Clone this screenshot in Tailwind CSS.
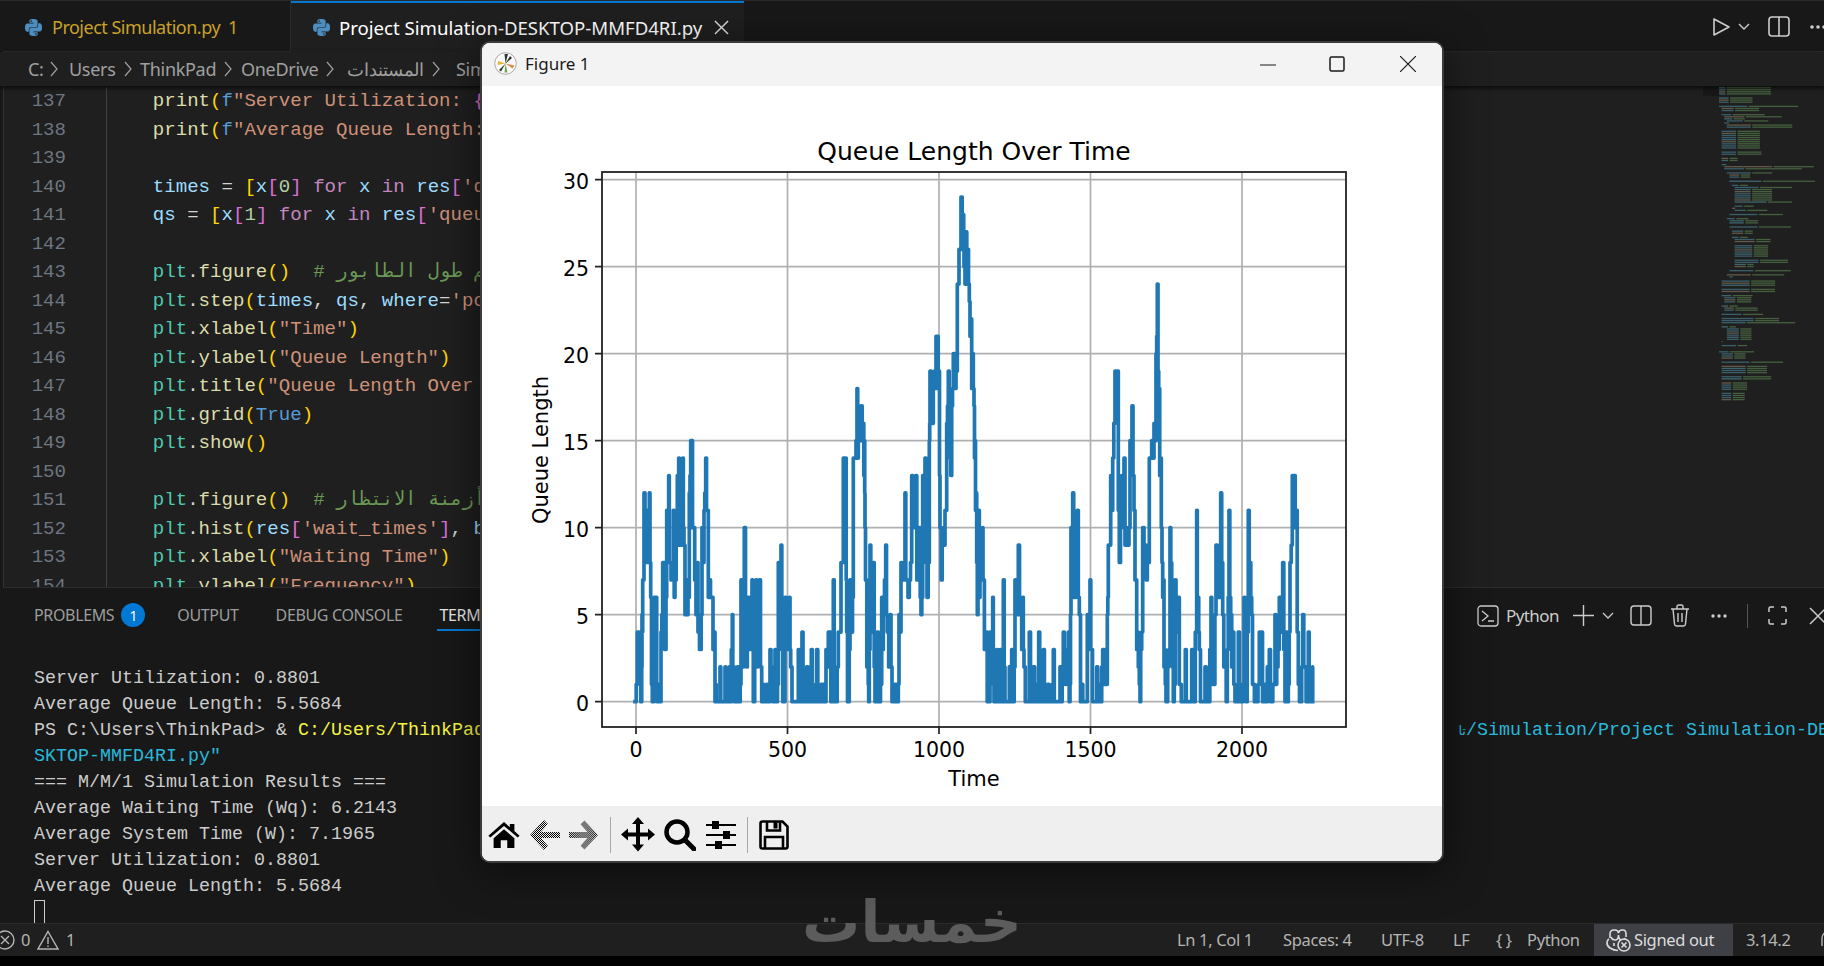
<!DOCTYPE html>
<html lang="en">
<head>
    <meta charset="UTF-8">
    <title>Project Simulation - VS Code</title>
    <script src="https://cdn.jsdelivr.net/npm/@tailwindcss/browser@4"></script>
</head>
<body class="bg-black">
<div class="relative w-[1824px] h-[966px] overflow-hidden flex flex-col bg-[#181818] font-['Noto_Sans',sans-serif]">

    <!-- Tabs -->
    <div class="h-[52px] shrink-0 flex bg-[#181818] border-t border-[#2b2b2b] pl-[3px] relative">
        <div class="w-[288px] h-[51px] flex items-center border-r border-b border-[#2b2b2b] pl-[22px] pt-[2px] text-[18px] tracking-[-0.5px] text-[#c9a227]">
            <svg class="w-[17px] h-[17px] fill-[#4d8dbf] mr-[10px]" viewBox="0 0 24 24"><path d="M14.25.18l.9.2.73.26.59.3.45.32.34.34.25.34.16.33.1.3.04.26.02.2-.01.13V8.5l-.05.63-.13.55-.21.46-.26.38-.3.31-.33.25-.35.19-.35.14-.33.1-.3.07-.26.04-.21.02H8.77l-.69.05-.59.14-.5.22-.41.27-.33.32-.27.35-.2.36-.15.37-.1.35-.07.32-.04.27-.02.21v3.06H3.17l-.21-.03-.28-.07-.32-.12-.35-.18-.36-.26-.36-.36-.35-.46-.32-.59-.28-.73-.21-.88-.14-1.05-.05-1.23.06-1.22.16-1.04.24-.87.32-.71.36-.57.4-.44.42-.33.42-.24.4-.16.36-.1.32-.05.24-.01h.16l.06.01h8.16v-.83H6.18l-.01-2.75-.02-.37.05-.34.11-.31.17-.28.25-.26.31-.23.38-.2.44-.18.51-.15.58-.12.64-.1.71-.06.77-.04.84-.02 1.27.05zm-6.3 1.98l-.23.33-.08.41.08.41.23.34.33.22.41.09.41-.09.33-.22.23-.34.08-.41-.08-.41-.23-.33-.33-.22-.41-.09-.41.09zm13.09 3.95l.28.06.32.12.35.18.36.27.36.35.35.47.32.59.28.73.21.88.14 1.04.05 1.23-.06 1.23-.16 1.04-.24.86-.32.71-.36.57-.4.45-.42.33-.42.24-.4.16-.36.09-.32.05-.24.02-.16-.01h-8.22v.82h5.84l.01 2.76.02.36-.05.34-.11.31-.17.29-.25.25-.31.24-.38.2-.44.17-.51.15-.58.13-.64.09-.71.07-.77.04-.84.01-1.27-.04-1.07-.14-.9-.2-.73-.25-.59-.3-.45-.33-.34-.34-.25-.34-.16-.33-.1-.3-.04-.25-.02-.2.01-.13v-5.34l.05-.64.13-.54.21-.46.26-.38.3-.32.33-.24.35-.2.35-.14.33-.1.3-.06.26-.04.21-.02.13-.01h5.84l.69-.05.59-.14.5-.21.41-.28.33-.32.27-.35.2-.36.15-.36.1-.35.07-.32.04-.28.02-.21V6.07h2.09l.14.01zm-6.47 14.25l-.23.33-.08.41.08.41.23.33.33.23.41.08.41-.08.33-.23.23-.33.08-.41-.08-.41-.23-.33-.33-.23-.41-.08-.41.08z"/></svg>
            <span>Project Simulation.py</span><span class="ml-[8px]">1</span>
        </div>
        <div class="w-[453px] h-[51px] flex items-center bg-[#1f1f1f] border-t-2 border-[#0078d4] pl-[22px] text-[18.6px] text-white">
            <svg class="w-[17px] h-[17px] fill-[#4d8dbf] mr-[9px]" viewBox="0 0 24 24"><path d="M14.25.18l.9.2.73.26.59.3.45.32.34.34.25.34.16.33.1.3.04.26.02.2-.01.13V8.5l-.05.63-.13.55-.21.46-.26.38-.3.31-.33.25-.35.19-.35.14-.33.1-.3.07-.26.04-.21.02H8.77l-.69.05-.59.14-.5.22-.41.27-.33.32-.27.35-.2.36-.15.37-.1.35-.07.32-.04.27-.02.21v3.06H3.17l-.21-.03-.28-.07-.32-.12-.35-.18-.36-.26-.36-.36-.35-.46-.32-.59-.28-.73-.21-.88-.14-1.05-.05-1.23.06-1.22.16-1.04.24-.87.32-.71.36-.57.4-.44.42-.33.42-.24.4-.16.36-.1.32-.05.24-.01h.16l.06.01h8.16v-.83H6.18l-.01-2.75-.02-.37.05-.34.11-.31.17-.28.25-.26.31-.23.38-.2.44-.18.51-.15.58-.12.64-.1.71-.06.77-.04.84-.02 1.27.05zm-6.3 1.98l-.23.33-.08.41.08.41.23.34.33.22.41.09.41-.09.33-.22.23-.34.08-.41-.08-.41-.23-.33-.33-.22-.41-.09-.41.09zm13.09 3.95l.28.06.32.12.35.18.36.27.36.35.35.47.32.59.28.73.21.88.14 1.04.05 1.23-.06 1.23-.16 1.04-.24.86-.32.71-.36.57-.4.45-.42.33-.42.24-.4.16-.36.09-.32.05-.24.02-.16-.01h-8.22v.82h5.84l.01 2.76.02.36-.05.34-.11.31-.17.29-.25.25-.31.24-.38.2-.44.17-.51.15-.58.13-.64.09-.71.07-.77.04-.84.01-1.27-.04-1.07-.14-.9-.2-.73-.25-.59-.3-.45-.33-.34-.34-.25-.34-.16-.33-.1-.3-.04-.25-.02-.2.01-.13v-5.34l.05-.64.13-.54.21-.46.26-.38.3-.32.33-.24.35-.2.35-.14.33-.1.3-.06.26-.04.21-.02.13-.01h5.84l.69-.05.59-.14.5-.21.41-.28.33-.32.27-.35.2-.36.15-.36.1-.35.07-.32.04-.28.02-.21V6.07h2.09l.14.01zm-6.47 14.25l-.23.33-.08.41.08.41.23.33.33.23.41.08.41-.08.33-.23.23-.33.08-.41-.08-.41-.23-.33-.33-.23-.41-.08-.41.08z"/></svg>
            <span class="whitespace-nowrap">Project Simulation-DESKTOP-MMFD4RI.py</span>
            <svg class="w-[15px] h-[15px] ml-[12px] stroke-[#e0e0e0] fill-none" viewBox="0 0 16 16" stroke-width="1.5"><path d="M1 1l14 14M15 1L1 15"/></svg>
        </div>
        <div class="flex-1 border-b border-[#2b2b2b] h-[51px]"></div>
        <!-- editor actions -->
        <div class="absolute left-[1712px] top-[15px] flex items-center stroke-[#cccccc] fill-none">
            <svg class="w-[19px] h-[20px]" viewBox="0 0 19 20" stroke-width="1.6"><path d="M2 2v16l15-8z" stroke-linejoin="round"/></svg>
            <svg class="w-[12px] h-[8px] ml-[7px]" viewBox="0 0 12 8" stroke-width="1.4"><path d="M1 1l5 5 5-5"/></svg>
            <svg class="w-[22px] h-[21px] ml-[18px]" viewBox="0 0 22 21" stroke-width="1.6"><rect x="1" y="1" width="20" height="19" rx="3"/><path d="M11 1v19"/></svg>
            <svg class="w-[20px] h-[6px] ml-[20px] fill-[#cccccc] stroke-none" viewBox="0 0 20 6"><circle cx="2" cy="3" r="1.8"/><circle cx="8" cy="3" r="1.8"/><circle cx="14" cy="3" r="1.8"/></svg>
        </div>
    </div>

    <!-- Breadcrumb -->
    <div class="h-[34px] shrink-0 relative z-10 flex items-center bg-[#1f1f1f] pl-[28px] text-[18px] tracking-[-0.3px] text-[#a0a0a0] whitespace-nowrap shadow-[0_2px_4px_rgba(0,0,0,0.7)]">
        <span class="w-[41px] flex items-center">C:<svg class="w-[8px] h-[16px] ml-[6px] stroke-[#a0a0a0] fill-none" viewBox="0 0 8 16" stroke-width="1.2"><path d="M1 1l6 7-6 7"/></svg></span>
        <span class="w-[71px] flex items-center">Users<svg class="w-[8px] h-[16px] ml-[8px] stroke-[#a0a0a0] fill-none" viewBox="0 0 8 16" stroke-width="1.2"><path d="M1 1l6 7-6 7"/></svg></span>
        <span class="w-[101px] flex items-center">ThinkPad<svg class="w-[8px] h-[16px] ml-[8px] stroke-[#a0a0a0] fill-none" viewBox="0 0 8 16" stroke-width="1.2"><path d="M1 1l6 7-6 7"/></svg></span>
        <span class="w-[106px] flex items-center">OneDrive<svg class="w-[8px] h-[16px] ml-[8px] stroke-[#a0a0a0] fill-none" viewBox="0 0 8 16" stroke-width="1.2"><path d="M1 1l6 7-6 7"/></svg></span>
        <span class="w-[109px] flex items-center">المستندات<svg class="w-[8px] h-[16px] ml-[8px] stroke-[#a0a0a0] fill-none" viewBox="0 0 8 16" stroke-width="1.2"><path d="M1 1l6 7-6 7"/></svg></span>
        <span>Simulation</span>
    </div>

    <!-- Editor -->
    <div class="h-[501px] shrink-0 relative flex bg-[#1f1f1f] border-l border-[#333333] ml-[3px] pt-[1px] overflow-hidden font-['Liberation_Mono',monospace] text-[19.08px]">
        <div class="w-[62px] shrink-0 text-right text-[#6e7681] leading-[28.5px]">
            <div>137</div><div>138</div><div>139</div><div>140</div><div>141</div><div>142</div><div>143</div><div>144</div><div>145</div><div>146</div><div>147</div><div>148</div><div>149</div><div>150</div><div>151</div><div>152</div><div>153</div><div>154</div>
        </div>
        <div class="ml-[40px] flex-1 border-l border-[#404040] leading-[28.5px] [&>div]:whitespace-pre text-[#d4d4d4] h-[513px]">
            <div>    <span class="text-[#dcdcaa]">print</span><span class="text-[#ffd700]">(</span><span class="text-[#569cd6]">f</span><span class="text-[#ce9178]">"Server Utilization: </span><span class="text-[#da70d6]">{</span><span class="text-[#9cdcfe]">res</span><span class="text-[#ce9178]">['utilization']:.4f}"</span><span class="text-[#ffd700]">)</span></div>
            <div>    <span class="text-[#dcdcaa]">print</span><span class="text-[#ffd700]">(</span><span class="text-[#569cd6]">f</span><span class="text-[#ce9178]">"Average Queue Length: </span><span class="text-[#da70d6]">{</span><span class="text-[#9cdcfe]">res</span><span class="text-[#ce9178]">['avg_queue']:.4f}"</span><span class="text-[#ffd700]">)</span></div>
            <div> </div>
            <div>    <span class="text-[#9cdcfe]">times</span> = <span class="text-[#ffd700]">[</span><span class="text-[#9cdcfe]">x</span><span class="text-[#da70d6]">[</span><span class="text-[#b5cea8]">0</span><span class="text-[#da70d6]">]</span> <span class="text-[#c586c0]">for</span> <span class="text-[#9cdcfe]">x</span> <span class="text-[#c586c0]">in</span> <span class="text-[#9cdcfe]">res</span><span class="text-[#da70d6]">[</span><span class="text-[#ce9178]">'queue_lengths'</span><span class="text-[#da70d6]">]</span><span class="text-[#ffd700]">]</span></div>
            <div>    <span class="text-[#9cdcfe]">qs</span> = <span class="text-[#ffd700]">[</span><span class="text-[#9cdcfe]">x</span><span class="text-[#da70d6]">[</span><span class="text-[#b5cea8]">1</span><span class="text-[#da70d6]">]</span> <span class="text-[#c586c0]">for</span> <span class="text-[#9cdcfe]">x</span> <span class="text-[#c586c0]">in</span> <span class="text-[#9cdcfe]">res</span><span class="text-[#da70d6]">[</span><span class="text-[#ce9178]">'queue_lengths'</span><span class="text-[#da70d6]">]</span><span class="text-[#ffd700]">]</span></div>
            <div> </div>
            <div>    <span class="text-[#4ec9b0]">plt</span>.<span class="text-[#dcdcaa]">figure</span><span class="text-[#ffd700]">()</span>  <span class="text-[#6a9955]"># رسم طول الطابور</span></div>
            <div>    <span class="text-[#4ec9b0]">plt</span>.<span class="text-[#dcdcaa]">step</span><span class="text-[#ffd700]">(</span><span class="text-[#9cdcfe]">times</span>, <span class="text-[#9cdcfe]">qs</span>, <span class="text-[#9cdcfe]">where</span>=<span class="text-[#ce9178]">'post'</span><span class="text-[#ffd700]">)</span></div>
            <div>    <span class="text-[#4ec9b0]">plt</span>.<span class="text-[#dcdcaa]">xlabel</span><span class="text-[#ffd700]">(</span><span class="text-[#ce9178]">"Time"</span><span class="text-[#ffd700]">)</span></div>
            <div>    <span class="text-[#4ec9b0]">plt</span>.<span class="text-[#dcdcaa]">ylabel</span><span class="text-[#ffd700]">(</span><span class="text-[#ce9178]">"Queue Length"</span><span class="text-[#ffd700]">)</span></div>
            <div>    <span class="text-[#4ec9b0]">plt</span>.<span class="text-[#dcdcaa]">title</span><span class="text-[#ffd700]">(</span><span class="text-[#ce9178]">"Queue Length Over Time"</span><span class="text-[#ffd700]">)</span></div>
            <div>    <span class="text-[#4ec9b0]">plt</span>.<span class="text-[#dcdcaa]">grid</span><span class="text-[#ffd700]">(</span><span class="text-[#569cd6]">True</span><span class="text-[#ffd700]">)</span></div>
            <div>    <span class="text-[#4ec9b0]">plt</span>.<span class="text-[#dcdcaa]">show</span><span class="text-[#ffd700]">()</span></div>
            <div> </div>
            <div>    <span class="text-[#4ec9b0]">plt</span>.<span class="text-[#dcdcaa]">figure</span><span class="text-[#ffd700]">()</span>  <span class="text-[#6a9955]"># توزيع أزمنة الانتظار</span></div>
            <div>    <span class="text-[#4ec9b0]">plt</span>.<span class="text-[#dcdcaa]">hist</span><span class="text-[#ffd700]">(</span><span class="text-[#9cdcfe]">res</span><span class="text-[#da70d6]">[</span><span class="text-[#ce9178]">'wait_times'</span><span class="text-[#da70d6]">]</span>, <span class="text-[#9cdcfe]">bins</span>=<span class="text-[#b5cea8]">30</span><span class="text-[#ffd700]">)</span></div>
            <div>    <span class="text-[#4ec9b0]">plt</span>.<span class="text-[#dcdcaa]">xlabel</span><span class="text-[#ffd700]">(</span><span class="text-[#ce9178]">"Waiting Time"</span><span class="text-[#ffd700]">)</span></div>
            <div>    <span class="text-[#4ec9b0]">plt</span>.<span class="text-[#dcdcaa]">ylabel</span><span class="text-[#ffd700]">(</span><span class="text-[#ce9178]">"Frequency"</span><span class="text-[#ffd700]">)</span></div>
        </div>
        <!-- Minimap -->
        <div class="w-[121px] shrink-0 relative">
            <div class="absolute left-0 top-0 w-[17px] h-[9px] bg-[#171717]"></div>
            <svg id="minimap" class="absolute left-[16px] top-0" width="105" height="340"></svg>
        </div>
    </div>

    <!-- Panel -->
    <div class="h-[336px] shrink-0 flex flex-col bg-[#181818] border-t border-[#2b2b2b] ml-[3px] overflow-hidden">
        <div class="h-[73px] shrink-0 text-[16px] tracking-[-0.35px] text-[#9d9d9d] whitespace-nowrap relative">
            <div class="flex items-center h-[28px] mt-[13px] pl-[31px]">
                <span>PROBLEMS</span>
                <span class="w-[24px] h-[24px] ml-[7px] rounded-full bg-[#0078d4] text-white text-[14px] flex items-center justify-center">1</span>
                <span class="ml-[32px]">OUTPUT</span>
                <span class="ml-[37px]">DEBUG CONSOLE</span>
                <span class="ml-[34px] text-[#e7e7e7] border-b-2 border-[#0078d4] h-[30px] leading-[28px] mt-[2px] px-[3px]">TERMINAL</span>
            </div>
            <!-- terminal actions -->
            <div class="absolute left-[1474px] top-[15px] flex items-center stroke-[#cccccc] fill-none text-[#cccccc]">
                <svg class="w-[22px] h-[22px]" viewBox="0 0 22 22" stroke-width="1.3"><rect x="1" y="1" width="20" height="20" rx="3"/><path d="M5 6l6 5-6 5M11 16h6"/></svg>
                <span class="ml-[7px] text-[17px] tracking-[-0.6px] w-[56px]">Python</span>
                <svg class="w-[21px] h-[21px] ml-[11px]" viewBox="0 0 21 21" stroke-width="1.4"><path d="M10.5 0v21M0 10.5h21"/></svg>
                <svg class="w-[12px] h-[7px] ml-[8px]" viewBox="0 0 12 7" stroke-width="1.3"><path d="M1 1l5 5 5-5"/></svg>
                <svg class="w-[22px] h-[21px] ml-[16px]" viewBox="0 0 22 21" stroke-width="1.4"><rect x="1" y="1" width="20" height="19" rx="3"/><path d="M11 1v19"/></svg>
                <svg class="w-[20px] h-[23px] ml-[18px]" viewBox="0 0 20 23" stroke-width="1.4"><path d="M1 5h18M7 5V2.5Q7 1 8.5 1h3Q13 1 13 2.5V5M3 5l1.5 15q.2 2 2 2h7q1.8 0 2-2L17 5M8 9v9M12 9v9"/></svg>
                <svg class="w-[16px] h-[4px] ml-[21px] fill-[#cccccc] stroke-none" viewBox="0 0 16 4"><circle cx="2" cy="2" r="1.7"/><circle cx="8" cy="2" r="1.7"/><circle cx="14" cy="2" r="1.7"/></svg>
                <span class="w-px h-[24px] bg-[#555555] ml-[20px]"></span>
                <svg class="w-[19px] h-[19px] ml-[20px]" viewBox="0 0 19 19" stroke-width="1.5"><path d="M1 6V2.5Q1 1 2.5 1H6M13 1h3.5Q18 1 18 2.5V6M18 13v3.5q0 1.500-1.500 1.500H13M6 18H2.500Q1 18 1 16.500V13"/></svg>
                <svg class="w-[18px] h-[18px] ml-[22px]" viewBox="0 0 18 18" stroke-width="1.5"><path d="M1 1l16 16M17 1L1 17"/></svg>
            </div>
        </div>
        <div class="pl-[31px] pt-[5px] font-['Liberation_Mono',monospace] text-[18.33px] leading-[26px] text-[#cccccc] [&>div]:whitespace-pre">
            <div>Server Utilization: 0.8801</div>
            <div>Average Queue Length: 5.5684</div>
            <div class="flex">
                <span class="w-[1408px] shrink-0 overflow-hidden">PS C:\Users\ThinkPad&gt; &amp; <span class="text-[#f5f543]">C:/Users/ThinkPad/AppData/Local/Python/bin/python.exe</span></span>
                <span class="w-[24px] shrink-0 text-right text-[#29b8db] font-['DejaVu_Sans',sans-serif] text-[13px]">تا</span>
                <span class="text-[#29b8db]">/Simulation/Project Simulation-DE</span>
            </div>
            <div class="text-[#29b8db]">SKTOP-MMFD4RI.py"</div>
            <div>=== M/M/1 Simulation Results ===</div>
            <div>Average Waiting Time (Wq): 6.2143</div>
            <div>Average System Time (W): 7.1965</div>
            <div>Server Utilization: 0.8801</div>
            <div>Average Queue Length: 5.5684</div>
            <div class="w-[11px] h-[24px] border border-[#cccccc]"></div>
        </div>
    </div>

    <!-- Status bar -->
    <div class="h-[33px] shrink-0 flex items-center bg-[#1f1f1f] border-t border-[#2b2b2b] text-[#b4b4b4] text-[16.5px] tracking-[-0.35px] whitespace-nowrap relative">
        <svg class="w-[20px] h-[20px] ml-[-5px] stroke-[#b4b4b4] fill-none" viewBox="0 0 20 20" stroke-width="1.4"><circle cx="10" cy="10" r="9"/><path d="M6 6l8 8M14 6l-8 8"/></svg>
        <span class="ml-[6px]">0</span>
        <svg class="w-[22px] h-[20px] ml-[7px] stroke-[#b4b4b4] fill-none" viewBox="0 0 22 20" stroke-width="1.4"><path d="M11 1.500L21 19H1zM11 7v7M11 15.500v1.500"/></svg>
        <span class="ml-[7px]">1</span>
        <div class="ml-auto flex items-center h-[32px]">
            <span class="w-[106px]">Ln 1, Col 1</span>
            <span class="w-[98px]">Spaces: 4</span>
            <span class="w-[72px]">UTF-8</span>
            <span class="w-[43px]">LF</span>
            <span class="w-[31px]">{ }</span>
            <span class="w-[67px]">Python</span>
            <span class="w-[139px] h-[32px] flex items-center pl-[12px] bg-[#3f4045] text-[#dcdcdc]">
                <svg class="w-[25px] h-[24px] mr-[3px] stroke-[#dcdcdc] fill-none shrink-0" viewBox="0 0 25 24" stroke-width="1.6"><path d="M3 11q-2 1-2 4 0 3 3 5 4 2.500 8 2.500M4 10V6q0-4 4-4h1q3 0 3.500 3 .5-3 3.500-3h1q3 0 3 4v3M5 9q1 3 4 3 3.500 0 3.500-5M12.500 7q0 5 3.500 5 2 0 3-2M8 15v3"/><circle cx="18" cy="17" r="6" fill="#3f4045"/><path d="M15.500 14.500l5 5M20.500 14.500l-5 5"/></svg>
                Signed out
            </span>
            <span class="w-[85px] pl-[13px]">3.14.2</span>
            <svg class="w-[20px] h-[20px] mr-[-14px] stroke-[#b4b4b4] fill-none" viewBox="0 0 20 20" stroke-width="1.4"><path d="M16 16V8a6 6 0 0 0-12 0v8"/></svg>
        </div>
    </div>
    <div class="flex-1 bg-black"></div>

    <!-- Watermark -->
    <div class="absolute left-[802px] top-[892px] w-[220px] h-[60px] text-center text-[#5c5c5c] text-[58px] leading-[60px] font-bold font-['DejaVu_Sans',sans-serif] whitespace-nowrap">خمسات</div>

    <!-- Figure window -->
    <div class="absolute z-20 left-[480px] top-[41px] w-[964px] h-[822px] flex flex-col bg-white border-2 border-[#3c3c3c] rounded-[10px] overflow-hidden shadow-[0_8px_40px_rgba(0,0,0,0.55)]">
        <div class="h-[43px] shrink-0 relative flex items-center bg-[#f3f3f3] pl-[12px] pb-[2px] text-[#1a1a1a] text-[17px]">
            <svg class="w-[23px] h-[23px]" viewBox="0 0 23 23">
                <circle cx="11.500" cy="11.500" r="10.800" fill="#fafafa" stroke="#a8a8a8"/>
                <path d="M11.500 11.500L4 9l-.5 4z" fill="#e2b93b"/>
                <path d="M11.500 11.500L14 2l-3.500 0z" fill="#333333"/>
                <path d="M11.500 11.500l7 5 2-3z" fill="#d98c4a"/>
                <path d="M11.500 11.500l-1 9 3 0z" fill="#6aa84f"/>
                <path d="M11.500 11.500L18 6l-2-2zM11.500 11.500L5 18l2 1.500z" fill="#333333"/>
            </svg>
            <span class="ml-[8px]">Figure 1</span>
            <svg class="absolute left-[778px] top-[14px] w-[16px] h-[16px] stroke-[#1a1a1a] fill-none" viewBox="0 0 16 16" stroke-width="1.200"><path d="M0 8h16"/></svg>
            <svg class="absolute left-[847px] top-[13px] w-[16px] h-[16px] stroke-[#1a1a1a] fill-none" viewBox="0 0 16 16" stroke-width="1.500"><rect x="1" y="1" width="14" height="14" rx="1.500"/></svg>
            <svg class="absolute left-[918px] top-[13px] w-[16px] h-[16px] stroke-[#1a1a1a] fill-none" viewBox="0 0 16 16" stroke-width="1.200"><path d="M0 0l16 16M16 0L0 16"/></svg>
        </div>

        <svg class="h-[720px] shrink-0 font-['DejaVu_Sans',sans-serif]" width="960" height="720" viewBox="482 86 960 720">
            <g stroke="#b0b0b0" stroke-width="1.700">
                <path d="M636 172V727M787.500 172V727M939 172V727M1090.500 172V727M1242 172V727"/>
                <path d="M602 179.700H1346M602 266.700H1346M602 353.700H1346M602 440.700H1346M602 527.700H1346M602 614.700H1346M602 701.700H1346"/>
            </g>
            <path id="trace" fill="none" stroke="#1f77b4" stroke-width="3.700" stroke-linejoin="round" stroke-linecap="square"/>
            <rect x="602" y="172" width="744" height="555" fill="none" stroke="#222222" stroke-width="1.800"/>
            <g stroke="#222222" stroke-width="1.700">
                <path d="M636 727v7M787.500 727v7M939 727v7M1090.500 727v7M1242 727v7"/>
                <path d="M602 179.700h-7M602 266.700h-7M602 353.700h-7M602 440.700h-7M602 527.700h-7M602 614.700h-7M602 701.700h-7"/>
            </g>
            <g font-size="20.500" fill="#000000" text-anchor="end">
                <text x="589" y="188.500">30</text><text x="589" y="275.500">25</text><text x="589" y="362.500">20</text><text x="589" y="449.500">15</text><text x="589" y="536.500">10</text><text x="589" y="623.500">5</text><text x="589" y="710.500">0</text>
            </g>
            <g font-size="20.500" fill="#000000" text-anchor="middle">
                <text x="636" y="757">0</text><text x="787.500" y="757">500</text><text x="939" y="757">1000</text><text x="1090.500" y="757">1500</text><text x="1242" y="757">2000</text>
            </g>
            <g font-size="21" fill="#000000" text-anchor="middle">
                <text x="974" y="786">Time</text>
                <text transform="translate(548 450) rotate(-90)">Queue Length</text>
                <text x="974" y="160" font-size="25">Queue Length Over Time</text>
            </g>
        </svg>

        <!-- Toolbar -->
        <div class="h-[55px] flex-1 flex items-center bg-[#efefef] pl-[6px] pt-[2px]">
            <svg class="w-[32px] h-[26px]" viewBox="0 0 24 20"><path d="M12 0L0 10.500l1.500 1.500L12 3l10.500 9L24 10.500 20 7V1.500h-3.500v2.500zM4 12.500L12 5.500l8 7V20h-5.500v-6h-5v6H4z" fill="#000000"/></svg>
            <svg class="w-[30px] h-[30px] ml-[10px]" viewBox="0 0 30 30"><defs><pattern id="dither" width="2" height="2" patternUnits="userSpaceOnUse"><rect width="1" height="1" fill="#000000"/><rect x="1" y="1" width="1" height="1" fill="#000000"/></pattern></defs><path d="M14 0L0 15l14 15 4-4-7-8h19v-6H11l7-8z" fill="url(#dither)"/></svg>
            <svg class="w-[29px] h-[30px] ml-[9px]" viewBox="0 0 30 30"><path d="M16 0l14 15-14 15-4-4 7-8H0v-6h19l-7-8z" fill="url(#dither)"/></svg>
            <span class="w-px h-[36px] bg-[#a8a8a8] ml-[12px]"></span>
            <svg class="w-[34px] h-[35px] ml-[10px]" viewBox="0 0 34 35"><path d="M17 0l6 7h-4v8.500h8v-4l7 6-7 6v-4h-8v8h4l-6 7-6-7h4v-8H7v4l-7-6 7-6v4h8V7h-4z" fill="#000000"/></svg>
            <svg class="w-[32px] h-[32px] ml-[9px] stroke-[#000000] fill-none" viewBox="0 0 32 32"><circle cx="13" cy="13" r="10.500" stroke-width="4.500"/><path d="M21 21l9 9" stroke-width="5" stroke-linecap="round"/></svg>
            <svg class="w-[30px] h-[28px] ml-[10px]" viewBox="0 0 30 28"><path d="M0 4h30M0 14h30M0 24h30" stroke="#000000" stroke-width="2"/><rect x="6" y="0" width="7" height="8" fill="#000000"/><rect x="17" y="10" width="7" height="8" fill="#000000"/><rect x="9" y="20" width="7" height="8" fill="#000000"/></svg>
            <span class="w-px h-[36px] bg-[#a8a8a8] ml-[11px]"></span>
            <svg class="w-[30px] h-[30px] ml-[11px] stroke-[#000000] fill-none" viewBox="0 0 30 30" stroke-width="2.600"><path d="M1.500 3.500q0-2 2-2h20l5 5v20q0 2-2 2h-23q-2 0-2-2z"/><path d="M8 1.500v9h13v-9"/><rect x="14.500" y="2" width="4" height="6.500" fill="#000000" stroke="none"/><path d="M6 28.500V17h18v11.500"/></svg>
        </div>
    </div>
</div>

<script>
    // y grid is 17.4px per queue step, 0 sits at y=701.7
    const yFor = q => 701.7 - q * 17.4;

    // [x, queue] points read off the plot, x in px from 600
    const partA = [105,0,112,4,120,4,124,0,126,5,128,7,132,12,138,9,142,11,148,12,152,6,157,0,162,6,168,6,172,0,180,0,183,4,188,8,192,8,196,3,200,11,206,13,210,8,216,8,220,11,225,7,232,13,236,14,240,9,248,14,252,9,264,6,268,12,272,15,275,15,280,10,288,5,292,8,296,5,301,3,306,10,312,11,317,14,322,11,328,7,335,6,343,4,347,1,350,0,360,2,365,0,375,2,380,0,388,2,397,5,400,2,405,0,412,2,418,0,423,7,428,2,433,10,440,2,444,6,450,4,456,7,460,0,468,7,472,3,478,7,485,0,500,1,510,3,525,3,530,0,535,8,543,9,548,0,555,6,568,6,572,2,580,0,595,3,600,0,606,4,612,0,620,2,628,0,634,3,640,0,650,3,660,0,672,0,678,3,685,4,690,4,695,0,700,7,705,0,715,4,723,8,730,14,737,14,740,4,745,0,750,7,755,4,760,14,768,15,771,18,775,15,783,17,790,16,793,15,795,10,798,7,803,3,806,0,810,9,815,4,820,8,825,0,832,4,838,0,845,6,850,6,857,9,862,4,870,5,876,0,893,0,897,5,903,8,908,7,915,12,920,7,928,7,935,13,948,13,953,7,958,10,963,5,968,13,975,14,981,6,988,15,990,19,1003,19,1008,21,1012,21,1017,19,1020,10,1030,10,1035,11,1040,16,1045,19,1050,14,1055,17,1060,20,1068,20,1072,24,1077,26,1083,29,1090,28,1092,25,1098,27,1103,26,1108,23,1112,22,1118,20,1122,17,1125,15,1128,12,1132,5,1136,11,1140,7,1148,10,1150,7,1160,4,1163,0,1170,4,1178,6,1182,0,1190,3,1195,0,1200,3,1205,0,1210,7,1215,0,1228,2,1235,3,1240,0,1245,7,1255,9,1262,5,1268,6,1272,2,1280,0,1288,4,1295,0,1300,2,1308,0,1316,4,1322,0,1330,3,1340,0,1350,0,1360,3,1366,0,1380,2,1390,4,1405,4,1410,1,1413,10,1418,12,1424,6,1432,11,1438,5,1445,1,1452,0,1462,5,1470,7,1475,3,1480,0,1490,2];
    // same, x in px from 1000
    const partB = [308,3,316,3,322,5,325,9,332,13,338,14,345,19,352,19,358,8,365,13,372,14,378,10,384,9,390,15,396,17,402,11,408,7,412,4,418,1,422,3,428,10,436,9,442,8,448,14,455,15,462,16,468,20,472,24,476,18,482,14,486,8,490,7,494,3,498,0,503,2,510,10,515,7,520,0,526,7,530,5,536,6,540,1,548,0,556,3,565,0,575,3,582,0,590,11,594,6,598,3,605,0,615,2,622,1,633,6,638,1,648,9,655,6,662,12,668,5,675,2,682,3,687,11,692,5,698,4,705,0,715,4,722,0,732,6,738,0,745,11,750,8,755,5,760,1,770,0,778,4,785,4,790,0,795,0,802,2,808,3,815,0,825,5,830,2,838,6,848,8,855,0,858,4,865,1,870,8,877,13,883,13,888,11,895,1,902,0,908,5,915,2,925,4,930,0,938,2,938,0];

    const points = [];
    for (let i = 0; i < partA.length; i += 2) points.push([600 + partA[i] / 3, partA[i + 1]]);
    for (let i = 0; i < partB.length; i += 2) points.push([1000 + partB[i] / 3, partB[i + 1]]);

    // the real run steps far more often than the read-off points, so fill between them
    let d = `M${points[0][0]} ${yFor(points[0][1])}`;
    let turn = 0;
    for (let i = 1; i < points.length; i++) {
        const [x0, q0] = points[i - 1];
        const [x1, q1] = points[i];
        const extra = Math.max(1, Math.floor(x1 - x0) - 1);
        for (let k = 1; k <= extra; k++) {
            const mid = Math.round(q0 + (q1 - q0) * k / (extra + 1));
            const q = mid === 0 ? (k % 2) : Math.max(0, mid - 1 - (turn++ % 3));
            d += `H${(x0 + (x1 - x0) * k / (extra + 1)).toFixed(1)}V${yFor(q).toFixed(1)}`;
        }
        d += `H${x1.toFixed(1)}V${yFor(q1).toFixed(1)}`;
    }
    document.getElementById('trace').setAttribute('d', d);

    // minimap: [lines, indent, teal, green], lines with only a count are blank
    const groups = [[4,0,8,55],[1],[3,0,12,28],[1],[1,0,35,62],[2,4,15,30],[1],[1,4,12,40],[1,8,25,45],[1,8,10,14],[1,12,20,30],[1,8,6,0],[2,12,30,50],[1],[9,4,18,28],[1],[2,4,18,30],[1],[2,4,8,10],[1],[1,4,6,0],[1,8,60,50],[1,8,25,70],[1],[1,12,30,25],[2,16,12,12],[1],[1,16,40,65],[1],[1,20,8,10],[1,24,30,40],[6,24,20,25],[1,24,40,30],[1],[1,24,10,12],[1,20,4,0],[1,24,14,25],[1],[1,16,35,30],[1],[1,12,10,15],[2,16,18,16],[1],[1,16,35,40],[1],[2,20,14,10],[1],[1,20,8,10],[2,24,25,18],[1],[6,24,22,18],[1],[2,24,30,35],[2,24,14,8],[1],[1,16,30,45],[1],[1,12,30,40],[1,16,4,0],[1],[3,4,35,30],[1],[2,4,35,30],[1],[1,4,12,25],[3,8,14,18],[1],[1,4,8,10],[2,8,12,28],[1],[1,4,25,25],[1],[2,4,40,30],[1,4,30,60],[1],[1,4,8,8],[6,12,15,14],[1,4,1,0],[1],[1,4,18,12],[2],[1,0,12,30],[3,4,14,14],[1],[1,4,35,40],[1],[4,4,30,25],[1],[2,4,25,35],[1],[4,4,12,18],[1],[4,4,12,15]];
    const colors = ['#3a5f6b', '#45603f', '#63594a', '#3f6670'];
    let svg = '', row = 0;
    groups.forEach(([count, indent, teal, green]) => {
        for (let i = 0; i < count; i++, row++) {
            if (teal === undefined) continue;
            const y = row * 2.08;
            const first = colors[(row * 7) % 4 === 2 ? 2 : row % 5 === 0 ? 3 : 0];
            const left = indent * 0.65;
            svg += `<rect x="${left}" y="${y}" width="${teal * 0.8}" height="1.3" fill="${first}"/>`;
            if (green) svg += `<rect x="${left + teal * 0.8 + 1.5}" y="${y}" width="${green * 0.8}" height="1.3" fill="${colors[1]}"/>`;
        }
    });
    document.getElementById('minimap').innerHTML = svg;
</script>
</body>
</html>
